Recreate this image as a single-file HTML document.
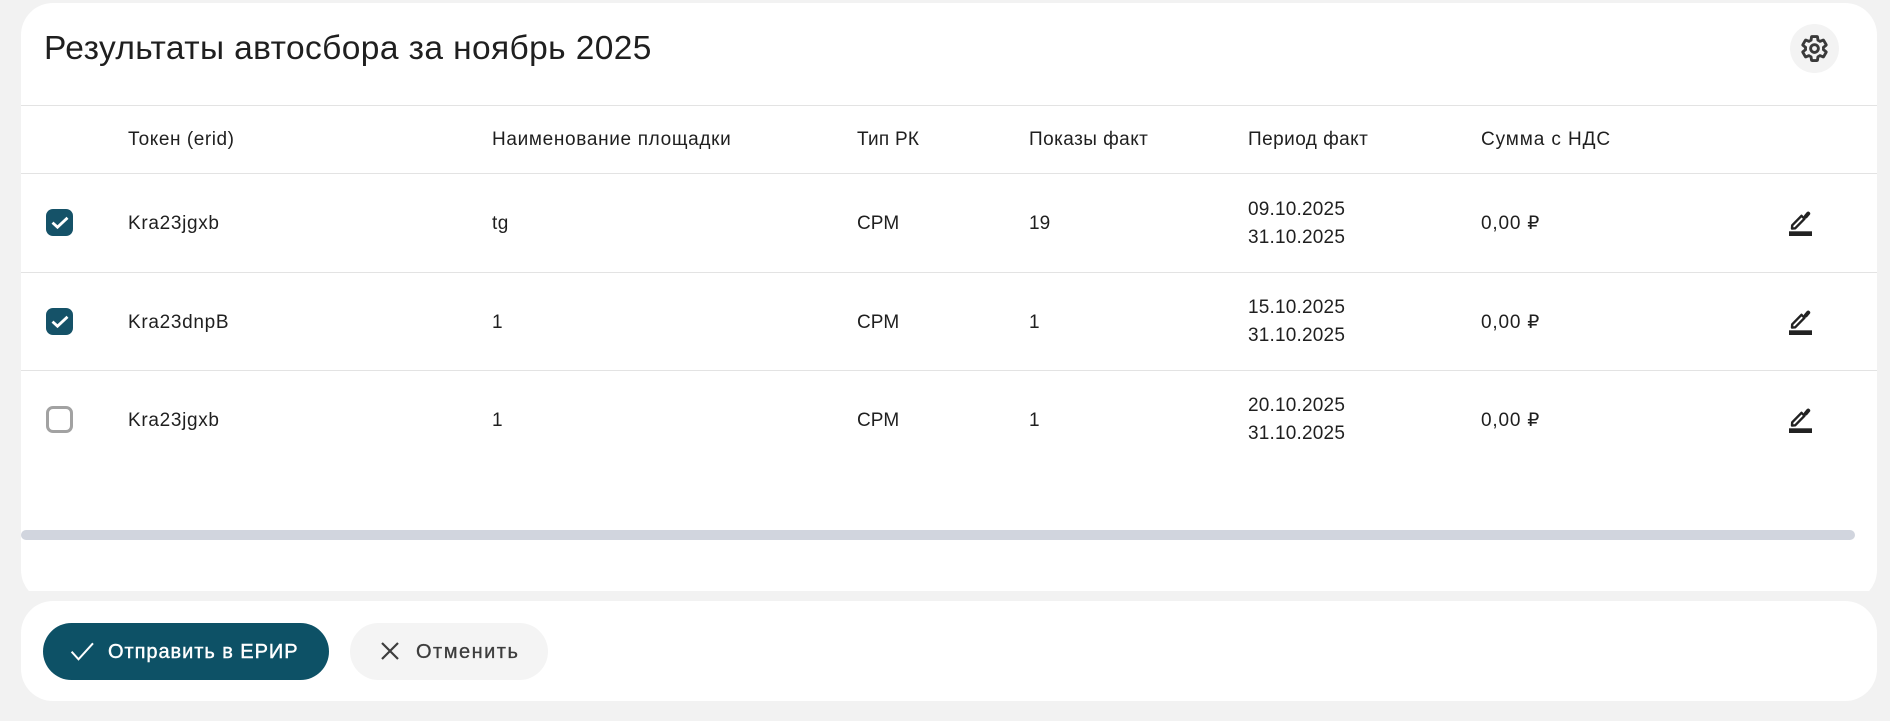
<!DOCTYPE html>
<html lang="ru">
<head>
<meta charset="utf-8">
<title>Результаты автосбора</title>
<style>
html,body{margin:0;padding:0;width:1890px;height:721px;overflow:hidden;background:#f2f2f2;}
body{position:relative;font-family:"Liberation Sans","DejaVu Sans",sans-serif;color:#1f1f1f;}
.card1clip{position:absolute;left:21px;top:3px;width:1856px;height:588px;overflow:hidden;}
.card1{position:absolute;left:0;top:0;width:1856px;height:599px;background:#fff;border-radius:32px;}
.card2{position:absolute;left:21px;top:601px;width:1856px;height:100px;background:#fff;border-radius:32px;}
.line{position:absolute;left:21px;width:1856px;height:1px;background:#e3e3e3;}
.t{position:absolute;white-space:nowrap;font-size:19px;line-height:28px;height:28px;letter-spacing:.5px;}
.d{letter-spacing:.2px;}
.cb{position:absolute;left:46px;width:27px;height:27px;border-radius:7px;background:#155268;box-sizing:border-box;}
.cb.off{background:#fff;border:3px solid #a2a2a2;}
.cb svg{position:absolute;left:0;top:0;}
.ed{position:absolute;left:1785px;width:30px;height:30px;}
.sb{position:absolute;left:21px;top:530px;width:1834px;height:10px;border-radius:5px;background:#d1d5de;}
.btn{position:absolute;top:623px;height:57px;border-radius:29px;}
.gear{position:absolute;left:1790px;top:24px;width:49px;height:49px;border-radius:50%;background:#f3f3f3;}
</style>
</head>
<body>
<div class="card1clip"><div class="card1"></div></div>
<div class="card2"></div>

<div class="t" style="left:44px;top:29px;font-size:33.5px;line-height:40px;height:40px;letter-spacing:.4px;">Результаты автосбора за ноябрь 2025</div>
<div class="gear">
<svg width="49" height="49" viewBox="0 0 49 49" style="position:absolute;left:0;top:0"><g transform="translate(9.5 9.5) scale(1.25)" fill="none" stroke="#3a3a3a" stroke-width="2.3" stroke-linejoin="round"><path d="M19.14 12.94c.04-.3.06-.61.06-.94 0-.32-.02-.64-.07-.94l2.03-1.58c.18-.14.23-.41.12-.61l-1.92-3.32c-.12-.22-.37-.29-.59-.22l-2.39.96c-.5-.38-1.03-.7-1.62-.94L14.4 2.81c-.04-.24-.24-.41-.48-.41h-3.84c-.24 0-.43.17-.47.41L9.25 5.35c-.59.24-1.13.57-1.62.94L5.24 5.33c-.22-.08-.47 0-.59.22L2.74 8.87c-.12.21-.08.47.12.61l2.03 1.58c-.05.3-.09.63-.09.94s.02.64.07.94l-2.03 1.58c-.18.14-.23.41-.12.61l1.92 3.32c.12.22.37.29.59.22l2.39-.96c.5.38 1.03.7 1.62.94l.36 2.54c.05.24.24.41.48.41h3.84c.24 0 .44-.17.47-.41l.36-2.54c.59-.24 1.13-.56 1.62-.94l2.39.96c.22.08.47 0 .59-.22l1.92-3.32c.12-.22.07-.47-.12-.61l-2.01-1.58z"/><circle cx="12" cy="12" r="3.1"/></g></svg>
</div>

<div class="line" style="top:105px"></div>
<div class="line" style="top:173px"></div>
<div class="line" style="top:272px"></div>
<div class="line" style="top:370px"></div>

<div class="t" style="left:128px;top:126px;letter-spacing:.55px">Токен (erid)</div>
<div class="t" style="left:492px;top:126px;letter-spacing:.67px">Наименование площадки</div>
<div class="t" style="left:857px;top:126px;letter-spacing:.25px">Тип РК</div>
<div class="t" style="left:1029px;top:126px;letter-spacing:.45px">Показы факт</div>
<div class="t" style="left:1248px;top:126px;letter-spacing:.45px">Период факт</div>
<div class="t" style="left:1481px;top:126px;letter-spacing:.9px">Сумма с НДС</div>

<!-- row 1 -->
<div class="cb" style="top:209px"><svg width="27" height="27" viewBox="0 0 27 27"><path d="M6.5 13.6l5 4.6 10-9.4" fill="none" stroke="#fff" stroke-width="2.8"/></svg></div>
<div class="t" style="left:128px;top:210px;letter-spacing:.68px">Kra23jgxb</div>
<div class="t" style="left:492px;top:210px">tg</div>
<div class="t" style="left:857px;top:210px;letter-spacing:0">CPM</div>
<div class="t" style="left:1029px;top:210px;letter-spacing:0">19</div>
<div class="t d" style="left:1248px;top:196px">09.10.2025</div>
<div class="t d" style="left:1248px;top:224px">31.10.2025</div>
<div class="t" style="left:1481px;top:210px;letter-spacing:.8px">0,00 ₽</div>
<svg class="ed" style="top:208px" viewBox="0 0 30 30"><path d="M7 20.5l.2-3.2 9.3-9.5 3 3-9.3 9.5z" fill="none" stroke="#222" stroke-width="2.4" stroke-linejoin="round"/><path d="M20.8 8.4l2.4-2.8" stroke="#222" stroke-width="4" stroke-linecap="round"/><rect x="4" y="23.3" width="23" height="4.7" fill="#222"/></svg>

<!-- row 2 -->
<div class="cb" style="top:308px"><svg width="27" height="27" viewBox="0 0 27 27"><path d="M6.5 13.6l5 4.6 10-9.4" fill="none" stroke="#fff" stroke-width="2.8"/></svg></div>
<div class="t" style="left:128px;top:309px;letter-spacing:.68px">Kra23dnpB</div>
<div class="t" style="left:492px;top:309px">1</div>
<div class="t" style="left:857px;top:309px;letter-spacing:0">CPM</div>
<div class="t" style="left:1029px;top:309px">1</div>
<div class="t d" style="left:1248px;top:294px">15.10.2025</div>
<div class="t d" style="left:1248px;top:322px">31.10.2025</div>
<div class="t" style="left:1481px;top:309px;letter-spacing:.8px">0,00 ₽</div>
<svg class="ed" style="top:307px" viewBox="0 0 30 30"><path d="M7 20.5l.2-3.2 9.3-9.5 3 3-9.3 9.5z" fill="none" stroke="#222" stroke-width="2.4" stroke-linejoin="round"/><path d="M20.8 8.4l2.4-2.8" stroke="#222" stroke-width="4" stroke-linecap="round"/><rect x="4" y="23.3" width="23" height="4.7" fill="#222"/></svg>

<!-- row 3 -->
<div class="cb off" style="top:406px"></div>
<div class="t" style="left:128px;top:407px;letter-spacing:.68px">Kra23jgxb</div>
<div class="t" style="left:492px;top:407px">1</div>
<div class="t" style="left:857px;top:407px;letter-spacing:0">CPM</div>
<div class="t" style="left:1029px;top:407px">1</div>
<div class="t d" style="left:1248px;top:392px">20.10.2025</div>
<div class="t d" style="left:1248px;top:420px">31.10.2025</div>
<div class="t" style="left:1481px;top:407px;letter-spacing:.8px">0,00 ₽</div>
<svg class="ed" style="top:405px" viewBox="0 0 30 30"><path d="M7 20.5l.2-3.2 9.3-9.5 3 3-9.3 9.5z" fill="none" stroke="#222" stroke-width="2.4" stroke-linejoin="round"/><path d="M20.8 8.4l2.4-2.8" stroke="#222" stroke-width="4" stroke-linecap="round"/><rect x="4" y="23.3" width="23" height="4.7" fill="#222"/></svg>

<div class="sb"></div>

<!-- buttons -->
<div class="btn" style="left:43px;width:286px;background:#0d5166"></div>
<svg style="position:absolute;left:70px;top:641px" width="25" height="20" viewBox="0 0 25 20"><path d="M1.6 10.7l6.9 7.6L23 2.3" fill="none" stroke="#fff" stroke-width="2"/></svg>
<div class="t" style="left:108px;top:638px;font-size:20px;color:#fff;letter-spacing:.95px;-webkit-text-stroke:.4px #fff;">Отправить в ЕРИР</div>
<div class="btn" style="left:350px;width:198px;background:#f4f4f4"></div>
<svg style="position:absolute;left:380px;top:641px" width="20" height="20" viewBox="0 0 20 20"><path d="M2 2l16 16M18 2L2 18" fill="none" stroke="#3d3d3d" stroke-width="2.2"/></svg>
<div class="t" style="left:416px;top:638px;font-size:20px;color:#3d3d3d;letter-spacing:1.5px;-webkit-text-stroke:.3px #3d3d3d;">Отменить</div>
</body>
</html>
